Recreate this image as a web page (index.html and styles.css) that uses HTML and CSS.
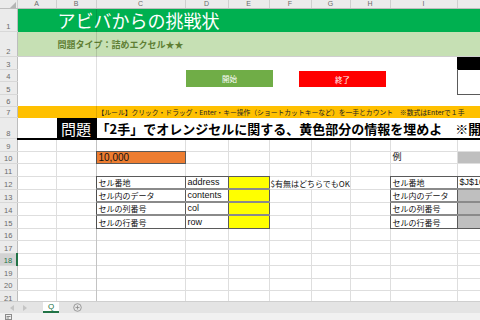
FILE: index.html
```html
<!DOCTYPE html>
<html lang="ja">
<head>
    <meta charset="UTF-8">
    <title>アビバからの挑戦状</title>
    <link rel="stylesheet" href="styles.css">
</head>
<body>
    <div class="window">
        <div class="grid-wrap">
            <table class="sheet">
                <colgroup>
                    <col class="w-head"><col class="w-a"><col class="w-b"><col class="w-c"><col class="w-d">
                    <col class="w-e"><col class="w-f"><col class="w-g"><col class="w-h"><col class="w-i"><col class="w-j">
                </colgroup>
                <thead>
                    <tr>
                        <th class="corner"><svg width="6" height="6" viewBox="0 0 6 6"><path d="M6 0V6H0Z" fill="#b4b4b4"/></svg></th>
                        <th>A</th><th>B</th><th>C</th><th>D</th><th>E</th><th>F</th><th>G</th><th>H</th><th>I</th><th>J</th>
                    </tr>
                </thead>
                <tbody>
                    <tr class="r1"><th>1</th><td colspan="10" class="title">アビバからの挑戦状</td></tr>
                    <tr class="r2"><th>2</th><td colspan="10" class="subtitle">問題タイプ：詰めエクセル★★</td></tr>
                    <tr class="r3"><th>3</th><td class="blank" colspan="9" rowspan="4"></td><td class="ink"></td></tr>
                    <tr class="r4"><th>4</th><td class="panel" rowspan="2"></td></tr>
                    <tr class="r5"><th>5</th></tr>
                    <tr class="r6"><th>6</th><td class="blank"></td></tr>
                    <tr class="r7"><th>7</th><td colspan="10" class="rule">【ルール】クリック・ドラッグ・Enter・キー操作（ショートカットキーなど）を一手とカウント　※数式はEnterで１手</td></tr>
                    <tr class="r8 question">
                        <th>8</th>
                        <td></td>
                        <td class="q-label">問題</td>
                        <td colspan="8" class="q-text">「2手」でオレンジセルに関する、黄色部分の情報を埋めよ　※開始</td>
                    </tr>
                    <tr class="tall"><th>9</th><td></td><td></td><td></td><td></td><td></td><td></td><td></td><td></td><td></td><td></td></tr>
                    <tr><th>10</th><td></td><td></td><td class="bx fill-o num">10,000</td><td></td><td></td><td></td><td></td><td></td><td>例</td><td class="fill-g"></td></tr>
                    <tr class="tall"><th>11</th><td></td><td></td><td></td><td></td><td></td><td></td><td></td><td></td><td></td><td></td></tr>
                    <tr>
                        <th>12</th><td></td><td></td>
                        <td class="bx sep jp">セル番地</td><td class="bx sep">address</td><td class="bx sep fill-y"></td>
                        <td colspan="2" class="note">$有無はどちらでもOK</td><td></td>
                        <td class="bx sep jp">セル番地</td><td class="bx sep">$J$10</td>
                    </tr>
                    <tr class="tall">
                        <th>13</th><td></td><td></td>
                        <td class="bx sep jp">セル内のデータ</td><td class="bx sep">contents</td><td class="bx sep fill-y"></td>
                        <td></td><td></td><td></td>
                        <td class="bx sep jp">セル内のデータ</td><td class="bx sep fill-g"></td>
                    </tr>
                    <tr>
                        <th>14</th><td></td><td></td>
                        <td class="bx sep jp">セルの列番号</td><td class="bx sep">col</td><td class="bx sep fill-y"></td>
                        <td></td><td></td><td></td>
                        <td class="bx sep jp">セルの列番号</td><td class="bx sep fill-g"></td>
                    </tr>
                    <tr class="tall">
                        <th>15</th><td></td><td></td>
                        <td class="bx jp">セルの行番号</td><td class="bx">row</td><td class="bx fill-y"></td>
                        <td></td><td></td><td></td>
                        <td class="bx jp">セルの行番号</td><td class="bx fill-g"></td>
                    </tr>
                    <tr><th>16</th><td></td><td></td><td></td><td></td><td></td><td></td><td></td><td></td><td></td><td></td></tr>
                    <tr class="tall"><th>17</th><td></td><td></td><td></td><td></td><td></td><td></td><td></td><td></td><td></td><td></td></tr>
                    <tr><th class="sel">18</th><td></td><td></td><td></td><td></td><td></td><td></td><td></td><td></td><td></td><td></td></tr>
                    <tr class="tall"><th>19</th><td></td><td></td><td></td><td></td><td></td><td></td><td></td><td></td><td></td><td></td></tr>
                    <tr><th>20</th><td></td><td></td><td></td><td></td><td></td><td></td><td></td><td></td><td></td><td></td></tr>
                    <tr class="tall"><th>21</th><td></td><td></td><td></td><td></td><td></td><td></td><td></td><td></td><td></td><td></td></tr>
                </tbody>
            </table>

            <!-- shapes and the freeze line sit on top of the cells -->
            <div class="freeze"></div>
            <div class="shape btn-start">開始</div>
            <div class="shape btn-end">終了</div>
        </div>

        <div class="tabs">
            <div class="tab-nav">
                <svg width="5" height="6" viewBox="0 0 5 6"><path d="M4 0V6L0 3Z" fill="#c4c4c4"/></svg>
                <svg width="5" height="6" viewBox="0 0 5 6"><path d="M1 0V6L5 3Z" fill="#c4c4c4"/></svg>
            </div>
            <div class="tab active">Q</div>
            <div class="tab-add">
                <svg width="9" height="9" viewBox="0 0 9 9"><circle cx="4.5" cy="4.5" r="3.8" fill="none" stroke="#8a8a8a" stroke-width="0.8"/><path d="M4.5 2.5V6.5M2.5 4.5H6.5" stroke="#8a8a8a" stroke-width="0.8"/></svg>
            </div>
        </div>
        <div class="status">
            <svg width="7" height="6" viewBox="0 0 7 6"><rect x="0.5" y="0.5" width="6" height="5" fill="none" stroke="#8c8c8c"/><path d="M1.5 2.5H5.5M1.5 4H4" stroke="#8c8c8c"/></svg>
        </div>
    </div>
</body>
</html>
```

FILE: styles.css
```css
body {
    margin: 0;
    font-family: "Liberation Sans", "Noto Sans CJK JP", sans-serif;
    background-color: #fff;
    overflow: hidden;
}

.window {
    width: 480px;
    height: 320px;
    display: flex;
    flex-direction: column;
    overflow: hidden;
}

.grid-wrap {
    position: relative;
    height: 301px;
    flex: none;
    overflow: hidden;
}

/* sheet */
.sheet {
    border-collapse: collapse;
    table-layout: fixed;
    width: 517px;
    font-size: 9px;
    color: #111;
}

.w-head { width: 17px; }
.w-a { width: 39px; }
.w-b { width: 40px; }
.w-c { width: 89px; }
.w-d { width: 43px; }
.w-e { width: 41px; }
.w-f { width: 42px; }
.w-g { width: 39px; }
.w-h { width: 40px; }
.w-i { width: 67px; }
.w-j { width: 60px; }

.sheet td {
    border: 1px solid #dedede;
    padding: 0 2px;
    white-space: nowrap;
    overflow: hidden;
    vertical-align: bottom;
    line-height: 11px;
}

.sheet thead th {
    height: 8px;
    padding: 0;
    background-color: #ebebeb;
    border-right: 1px solid #cfcfcf;
    border-bottom: 1px solid #bdbdbd;
    font-size: 7px;
    font-weight: normal;
    line-height: 8px;
    color: #6a6a6a;
}

.sheet thead th.corner {
    text-align: right;
    vertical-align: bottom;
    padding-right: 1px;
}

.sheet thead th.corner svg {
    display: block;
    margin-left: auto;
}

.sheet tbody th {
    padding: 0;
    background-color: #ebebeb;
    border-right: 1px solid #bdbdbd;
    border-bottom: 1px solid #d8d8d8;
    font-size: 7.5px;
    font-weight: normal;
    line-height: 9px;
    color: #6a6a6a;
    vertical-align: bottom;
    text-align: center;
}

.sheet tbody th.sel {
    background-color: #d2d2d2;
    color: #217346;
    border-right: 2px solid #217346;
}

tbody tr { height: 12px; }
tbody tr.tall { height: 13px; }
tr.r1 { height: 23px; }
tr.r2 { height: 25px; }
tr.r3 { height: 13px; }
tr.r4 { height: 12px; }
tr.r5 { height: 13px; }
tr.r6 { height: 12px; }
tr.r7 { height: 11px; }
tr.r8 { height: 21px; }

/* banner rows */
.sheet td.title {
    background-color: #00b050;
    border-color: #00b050;
    color: #fff;
    font-family: "Noto Sans CJK JP", sans-serif;
    font-size: 18px;
    line-height: 21px;
    padding-left: 40px;
    vertical-align: middle;
    overflow: visible;
}

.sheet td.subtitle {
    background-color: #c6e0b4;
    border-color: #c6e0b4;
    border-bottom-color: #cfcfcf;
    color: #5f7f34;
    font-family: "Noto Sans CJK JP", sans-serif;
    font-size: 9px;
    font-weight: bold;
    padding-left: 40px;
    vertical-align: middle;
}

.sheet td.blank {
    border: none;
}

.sheet td.ink {
    background-color: #000;
    border-color: #000;
}

.sheet td.panel {
    border: 1px double #5a5a5a; /* double beats solid in collapsed borders */
    border-top: none;
}

.sheet td.rule {
    background-color: #ffc000;
    border-color: #ffc000;
    font-family: "Noto Sans CJK JP", sans-serif;
    font-size: 6.8px;
    line-height: 10px;
    color: #222;
    padding-left: 80px;
    vertical-align: middle;
}

.question td {
    border-color: #fff;
    border-bottom: 2px solid #000;
}

.sheet td.q-label {
    background-color: #000;
    border-color: #000;
    border-bottom-color: #000;
    color: #fff;
    font-family: "Noto Sans CJK JP", sans-serif;
    font-size: 15px;
    line-height: 19px;
    text-align: center;
    padding: 0;
}

.sheet td.q-text {
    font-family: "Noto Sans CJK JP", sans-serif;
    font-size: 13px;
    font-weight: bold;
    line-height: 19px;
    color: #000;
    padding-left: 0;
}

/* framed cells */
.sheet td.bx {
    border: 1px double #5a5a5a;
}

.sheet td.sep {
    border-bottom: 2px solid #8a8a8a;
}

.sheet td.jp {
    font-family: "Noto Sans CJK JP", sans-serif;
    font-size: 8px;
}

.sheet td.note {
    font-family: "Noto Sans CJK JP", sans-serif;
    font-size: 8px;
    padding-left: 1px;
}

.sheet td.num {
    font-size: 10px;
}

.fill-o { background-color: #ed7d31; }
.fill-y { background-color: #ffff00; }
.fill-g { background-color: #bfbfbf; }

/* overlays */
.freeze {
    position: absolute;
    left: 96px;
    top: 9px;
    bottom: 0;
    width: 1px;
    background-color: rgba(0, 0, 0, 0.12);
}

.shape {
    position: absolute;
    width: 87px;
    height: 17px;
    display: flex;
    align-items: center;
    justify-content: center;
    color: #fff;
    font-family: "Noto Sans CJK JP", sans-serif;
    font-size: 7.5px;
}

.btn-start {
    left: 186px;
    top: 70px;
    background-color: #70ad47;
}

.btn-end {
    left: 299px;
    top: 71px;
    height: 16px;
    background-color: #ff0000;
}

/* sheet tabs */
.tabs {
    height: 11px;
    flex: none;
    display: flex;
    align-items: stretch;
    background-color: #e4e4e4;
    border-top: 1px solid #cfcfcf;
}

.tab-nav {
    width: 43px;
    display: flex;
    align-items: center;
    gap: 7px;
    padding-left: 10px;
    box-sizing: border-box;
}

.tab {
    width: 16px;
    background-color: #fff;
    color: #217346;
    font-size: 8px;
    line-height: 9px;
    text-align: center;
    border-bottom: 2px solid #217346;
}

.tab-add {
    display: flex;
    align-items: center;
    padding-left: 14px;
}

.status {
    flex: 1;
    background-color: #f1f1f1;
    display: flex;
    align-items: center;
    padding-left: 5px;
}
```
